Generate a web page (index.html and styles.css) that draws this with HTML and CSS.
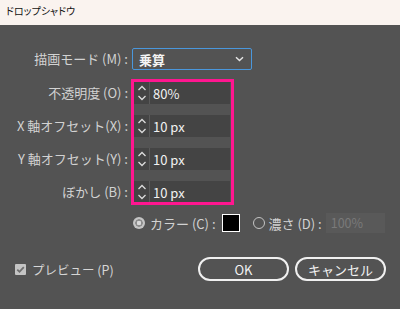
FILE: index.html
```html
<!DOCTYPE html>
<html lang="ja">
<head>
<meta charset="utf-8">
<link rel="stylesheet" href="styles.css">
</head>
<body>
<div class="titlebar">ドロップシャドウ</div>
<div class="content">
  <div class="form">
    <div class="label r1">描画モード (M) :</div>
    <div class="select r1"><span class="select-value">乗算</span>
      <svg class="select-chev" width="9" height="6" viewBox="0 0 9 6"><path d="M1 1.2 L4.5 4.6 L8 1.2" fill="none" stroke="#e6e6e6" stroke-width="1.4"/></svg>
    </div>

    <div class="label r2">不透明度 (O) :</div>
    <div class="field r2"><span class="spin"><svg width="10" height="18" viewBox="0 0 10 18"><path d="M1.5 6 L5 2.5 L8.5 6" fill="none" stroke="#dcdcdc" stroke-width="1.3"/><path d="M1.5 12 L5 15.5 L8.5 12" fill="none" stroke="#dcdcdc" stroke-width="1.3"/></svg></span><span class="value">80%</span></div>

    <div class="label r3">X 軸オフセット(X) :</div>
    <div class="field r3"><span class="spin"><svg width="10" height="18" viewBox="0 0 10 18"><path d="M1.5 6 L5 2.5 L8.5 6" fill="none" stroke="#dcdcdc" stroke-width="1.3"/><path d="M1.5 12 L5 15.5 L8.5 12" fill="none" stroke="#dcdcdc" stroke-width="1.3"/></svg></span><span class="value">10 px</span></div>

    <div class="label r4">Y 軸オフセット(Y) :</div>
    <div class="field r4"><span class="spin"><svg width="10" height="18" viewBox="0 0 10 18"><path d="M1.5 6 L5 2.5 L8.5 6" fill="none" stroke="#dcdcdc" stroke-width="1.3"/><path d="M1.5 12 L5 15.5 L8.5 12" fill="none" stroke="#dcdcdc" stroke-width="1.3"/></svg></span><span class="value">10 px</span></div>

    <div class="label r5">ぼかし (B) :</div>
    <div class="field r5"><span class="spin"><svg width="10" height="18" viewBox="0 0 10 18"><path d="M1.5 6 L5 2.5 L8.5 6" fill="none" stroke="#dcdcdc" stroke-width="1.3"/><path d="M1.5 12 L5 15.5 L8.5 12" fill="none" stroke="#dcdcdc" stroke-width="1.3"/></svg></span><span class="value">10 px</span></div>

    <div class="highlight"></div>
  </div>

  <div class="radio-row">
    <span class="radio radio-on"></span>
    <span class="radio-label">カラー (C) :</span>
    <span class="swatch"></span>
    <span class="radio radio-off"></span>
    <span class="radio-label">濃さ (D) :</span>
    <span class="disabled-input">100%</span>
  </div>

  <div class="bottom-row">
    <span class="checkbox"><svg width="11" height="11" viewBox="0 0 11 11"><path d="M2.3 5.6 L4.5 7.8 L8.8 3.2" fill="none" stroke="#6e6e6e" stroke-width="1.8"/></svg></span>
    <span class="check-label">プレビュー (P)</span>
    <span class="btn btn-ok">OK</span>
    <span class="btn">キャンセル</span>
  </div>
</div>
</body>
</html>
```

FILE: styles.css
```css
html, body {
  margin: 0;
  padding: 0;
}
body {
  width: 400px;
  height: 309px;
  overflow: hidden;
  background: #535353;
  font-family: "Noto Sans CJK JP", "Noto Sans", sans-serif;
  color: #d2d2d2;
}
.titlebar {
  height: 25px;
  box-sizing: border-box;
  background: #faf3ef;
  color: #111;
  font-size: 10px;
  font-feature-settings: "palt";
  line-height: 22px;
  padding-left: 6px;
}
.content {
  padding-top: 23px;
}
.form {
  display: grid;
  grid-template-columns: 128px auto;
  grid-template-rows: 23px repeat(4, 22px);
  column-gap: 4px;
  row-gap: 11px;
}
.r1 { grid-row: 1; }
.r2 { grid-row: 2; }
.r3 { grid-row: 3; }
.r4 { grid-row: 4; }
.r5 { grid-row: 5; }
.label {
  grid-column: 1;
  text-align: right;
  font-size: 13px;
  line-height: 22px;
  align-self: start;
  color: #d2d2d2;
  white-space: nowrap;
}
.select {
  grid-column: 2;
  width: 120px;
  height: 22px;
  box-sizing: border-box;
  border: 1px solid #4a97dc;
  border-radius: 2px;
  display: flex;
  align-items: center;
  padding: 0 7px 0 6px;
  align-self: start;
}
.select-value {
  flex: 1;
  color: #f4f4f4;
  font-weight: bold;
  font-size: 13px;
}
.field {
  grid-column: 2;
  margin-left: 2px;
  width: 96px;
  height: 22px;
  background: #444444;
  display: flex;
  align-items: center;
}
.spin {
  width: 16px;
  height: 22px;
  display: flex;
  align-items: center;
  justify-content: center;
  border-right: 1px solid #5a5a5a;
  box-sizing: border-box;
}
.value {
  padding-left: 3px;
  font-size: 13px;
  color: #f2f2f2;
}
.highlight {
  grid-column: 2;
  grid-row: 2 / 6;
  width: 103px;
  margin: -3px 0 -2px -1px;
  box-sizing: border-box;
  border: 3px solid #ff1690;
  pointer-events: none;
}
.radio-row {
  display: flex;
  align-items: center;
  height: 20px;
  margin-top: 10px;
  padding-left: 133px;
  font-size: 13px;
}
.radio {
  width: 12px;
  height: 12px;
  box-sizing: border-box;
  border-radius: 50%;
  flex: none;
}
.radio-on {
  background: radial-gradient(circle, #d8d8d8 0 2px, #8c8c8c 2.5px 3.5px, #c4c4c4 4px);
}
.radio-off {
  border: 1.5px solid #c4c4c4;
  margin-left: 13px;
}
.radio-label {
  margin-left: 5px;
  color: #d2d2d2;
  white-space: nowrap;
}
.radio-off + .radio-label {
  margin-left: 4px;
}
.swatch {
  width: 18px;
  height: 18px;
  box-sizing: border-box;
  background: #000;
  border: 1px solid #fff;
  margin-left: 6px;
  flex: none;
}
.disabled-input {
  margin-left: 4px;
  width: 59px;
  height: 20px;
  background: #595959;
  color: #7a7a7a;
  font-size: 12.5px;
  line-height: 20px;
  padding-left: 5px;
  box-sizing: border-box;
  flex: none;
}
.bottom-row {
  display: flex;
  align-items: center;
  height: 24px;
  margin-top: 24px;
  padding: 0 14px 0 15px;
}
.checkbox {
  width: 11px;
  height: 11px;
  background: #c4c4c4;
  border-radius: 1px;
  display: flex;
}
.check-label {
  margin-left: 6px;
  font-size: 12.5px;
  color: #d6d6d6;
}
.btn {
  width: 91px;
  height: 24px;
  box-sizing: border-box;
  border: 2px solid #f0f0f0;
  border-radius: 12px;
  display: flex;
  align-items: center;
  justify-content: center;
  font-size: 13px;
  color: #f2f2f2;
  margin-left: 6px;
}
.btn-ok {
  margin-left: auto;
}
```
